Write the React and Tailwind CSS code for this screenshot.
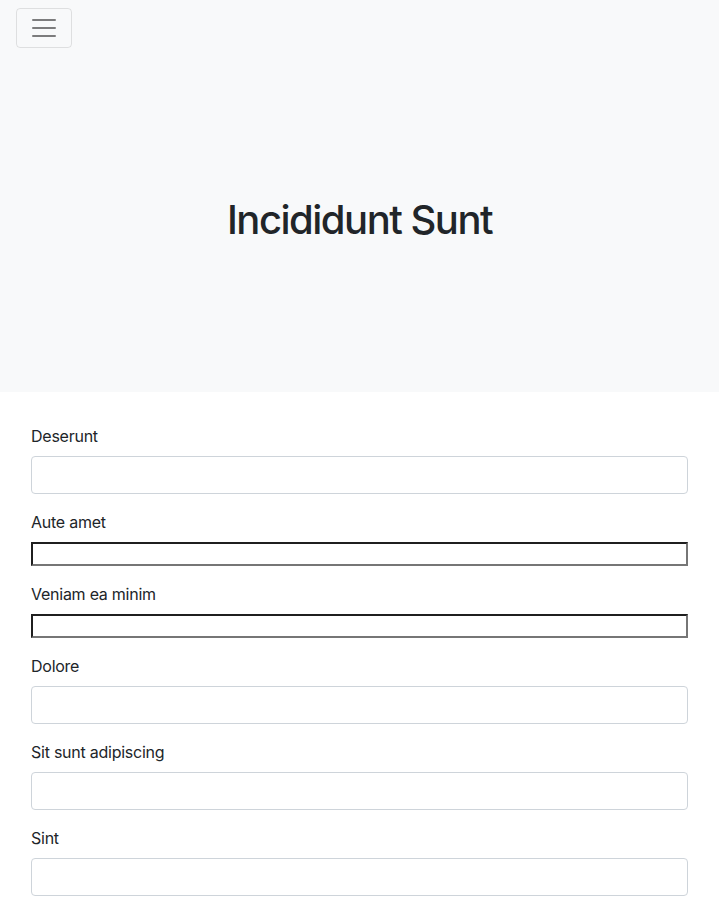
const fields = [
  { label: "Deserunt", kind: "control" },
  { label: "Aute amet", kind: "plain" },
  { label: "Veniam ea minim", kind: "plain" },
  { label: "Dolore", kind: "control" },
  { label: "Sit sunt adipiscing", kind: "control" },
  { label: "Sint", kind: "control" },
];

const App = () => {
  return (
    <div className="min-h-screen bg-white text-[#212529] font-['Inter','Liberation_Sans',sans-serif]">

      {/* Header */}
      <header className="bg-[#f8f9fa] h-[392px] flex flex-col">
        <div className="pt-2 pl-4">
          <button className="w-[56px] h-[40px] border border-black/10 rounded flex items-center justify-center">
            <svg width="30" height="30" viewBox="0 0 30 30">
              <path
                d="M4 7h22M4 15h22M4 23h22"
                stroke="rgba(0,0,0,0.5)"
                strokeWidth="2"
                strokeLinecap="round"
              />
            </svg>
          </button>
        </div>
        <div className="flex-1 flex items-center justify-center">
          <h1 className="text-[40px] font-medium leading-tight tracking-[-1.5px]">
            Incididunt Sunt
          </h1>
        </div>
      </header>

      {/* Form */}
      <form className="px-[31px] pt-8">
        {fields.map((f) => (
          <div key={f.label} className="mb-4">
            <label className="block mb-2 text-base leading-6 tracking-[-0.25px]">{f.label}</label>
            {f.kind === "control" ? (
              <input
                type="text"
                className="block w-full h-[38px] px-3 border border-[#ced4da] rounded bg-white"
              />
            ) : (
              <input
                type="text"
                className="block w-full h-[24px] border-2 border-t-[#1f1f1f] border-l-[#1f1f1f] border-b-[#767676] border-r-[#767676] bg-white"
              />
            )}
          </div>
        ))}
      </form>

    </div>
  )
}

export default App
